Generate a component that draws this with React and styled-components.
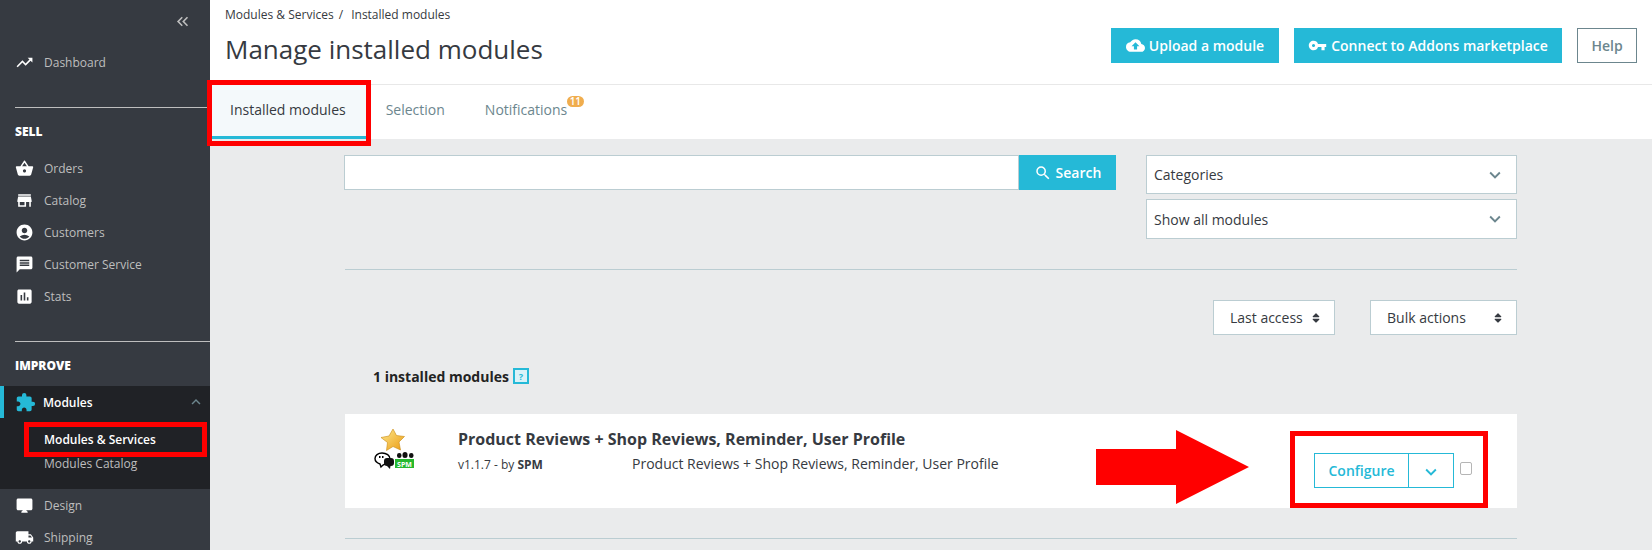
import styled, { createGlobalStyle } from 'styled-components';
import {
  MdTrendingUp, MdShoppingBasket, MdStore, MdAccountCircle, MdMessage, MdAssessment,
  MdExtension, MdDesktopMac, MdLocalShipping, MdCloudUpload, MdVpnKey, MdSearch,
  MdExpandMore, MdExpandLess, MdKeyboardDoubleArrowLeft,
} from 'react-icons/md';
import { FaSort } from 'react-icons/fa';

const GlobalStyle = createGlobalStyle`
  html, body { margin: 0; padding: 0; height: 550px; overflow: hidden; }
  body { font-family: "Open Sans", "Liberation Sans", sans-serif; color: #363a41; }
  * { box-sizing: border-box; }
`;

const Page = styled.div`
  display: flex;
  width: 1652px;
  height: 550px;
  overflow: hidden;
`;

const Sidebar = styled.aside`
  width: 210px;
  flex-shrink: 0;
  background: #363a41;
  color: #bebebe;
  font-size: 12px;
`;

const Collapse = styled.div`
  display: flex;
  justify-content: flex-end;
  height: 46px;
  padding: 12px 18px 0 0;
  color: #bebebe;
  font-size: 19px;
`;

const NavRow = styled.div`
  display: flex;
  align-items: center;
  height: 32px;
  padding-left: 15px;
  gap: 10px;
  svg { font-size: 19px; color: #fff; flex-shrink: 0; }
`;

const NavList = styled.div`
  margin-top: 8px;
`;

const Divider = styled.div`
  height: 1px;
  margin-left: 15px;
  margin-top: ${p => p.$top}px;
  background: #bebebe;
`;

const SectionTitle = styled.div`
  color: #fff;
  font-size: 12px;
  font-weight: 800;
  height: 24px;
  line-height: 24px;
  padding-left: 15px;
  margin-top: ${p => p.$top}px;
  margin-bottom: ${p => p.$bottom || 0}px;
`;

const ActiveGroup = styled.div`
  background: #202226;
  height: 103px;
  position: relative;
`;

const ActiveRow = styled.div`
  display: flex;
  align-items: center;
  height: 32px;
  padding: 0 5px 0 11px;
  border-left: 4px solid #25b9d7;
  gap: 8px;
  color: #fff;
  font-size: 12px;
  font-weight: 600;
  svg:first-child { font-size: 21px; color: #25b9d7; margin-right: -1px; }
  span { flex: 1; }
  svg:last-child { font-size: 18px; color: #6c868e; }
`;

const SubLink = styled.div`
  height: 24px;
  line-height: 24px;
  padding-left: 44px;
  font-size: 12px;
  color: ${p => (p.$active ? '#fff' : '#bebebe')};
  font-weight: ${p => (p.$active ? 600 : 400)};
  margin-top: ${p => (p.$active ? 10 : 0)}px;
`;

const RedFrame = styled.div`
  position: absolute;
  border: 5px solid #ff0000;
  pointer-events: none;
`;

const SideFrame = styled(RedFrame)`
  left: 24px;
  top: 36px;
  width: 183px;
  height: 35px;
`;

const TabFrame = styled(RedFrame)`
  left: -3px;
  top: -5px;
  width: 164px;
  height: 66px;
`;

const ActionFrame = styled(RedFrame)`
  left: 945px;
  top: 17px;
  width: 198px;
  height: 77px;
`;

const Main = styled.main`
  flex: 1;
  min-width: 0;
  background: #eaebec;
`;

const Header = styled.header`
  background: #fff;
  height: 85px;
  border-bottom: 1px solid #e8e8e8;
  padding: 0 15px;
  display: flex;
  justify-content: space-between;
`;

const Breadcrumb = styled.div`
  font-size: 12px;
  line-height: 16px;
  padding-top: 7px;
  color: #363a41;
  span { margin: 0 5px; }
`;

const Title = styled.h1`
  margin: 8px 0 0;
  font-size: 26px;
  line-height: 36px;
  font-weight: 400;
  color: #363a41;
`;

const Actions = styled.div`
  display: flex;
  gap: 15px;
  padding-top: 28px;
`;

const PrimaryButton = styled.div`
  display: flex;
  align-items: center;
  justify-content: center;
  gap: 4px;
  height: 35px;
  width: ${p => p.$width}px;
  background: #25b9d7;
  color: #fff;
  font-size: 14px;
  font-weight: 600;
  svg { font-size: 19px; }
`;

const HelpButton = styled.div`
  display: flex;
  align-items: center;
  justify-content: center;
  height: 35px;
  width: 60px;
  border: 1px solid #6c868e;
  color: #6c868e;
  font-size: 14px;
  font-weight: 600;
`;

const Tabs = styled.nav`
  display: flex;
  align-items: stretch;
  height: 54px;
  background: #fff;
  padding-left: 2px;
  position: relative;
`;

const Tab = styled.div`
  position: relative;
  display: flex;
  align-items: center;
  height: 54px;
  padding: 0 20px 3px ${p => (p.$active ? 18 : 20)}px;
  font-size: 14px;
  color: ${p => (p.$active ? '#363a41' : '#6c868e')};
  background: ${p => (p.$active ? '#f4f9fb' : '#fff')};
  border-bottom: 3px solid ${p => (p.$active ? '#25b9d7' : 'transparent')};
`;

const Badge = styled.span`
  position: absolute;
  left: 102px;
  top: 11px;
  width: 17px;
  height: 11px;
  border-radius: 6px;
  background: #f0ad4e;
  color: #fff;
  font-size: 10px;
  font-weight: 600;
  line-height: 11px;
  text-align: center;
`;

const Content = styled.div`
  width: 1172px;
  margin-left: 135px;
  padding-top: 16px;
`;

const FilterRow = styled.div`
  display: flex;
  justify-content: space-between;
`;

const SearchBox = styled.div`
  display: flex;
  width: 772px;
  height: 35px;
  margin-left: -1px;
`;

const SearchInput = styled.div`
  flex: 1;
  background: #fff;
  border: 1px solid #bbcdd2;
`;

const SearchButton = styled.div`
  width: 97px;
  display: flex;
  align-items: center;
  justify-content: center;
  gap: 4px;
  background: #25b9d7;
  color: #fff;
  font-size: 14px;
  font-weight: 600;
  svg { font-size: 18px; }
`;

const SelectColumn = styled.div`
  display: flex;
  flex-direction: column;
  gap: 5px;
  width: 371px;
`;

const Select = styled.div`
  display: flex;
  align-items: center;
  justify-content: space-between;
  height: ${p => p.$height}px;
  padding: 0 10px 0 7px;
  background: #fff;
  border: 1px solid #bbcdd2;
  font-size: 14px;
  svg { font-size: 22px; color: #6c868e; }
`;

const Rule = styled.div`
  height: 1px;
  background: #bbcdd2;
  margin-top: 30px;
`;

const SortRow = styled.div`
  display: flex;
  justify-content: flex-end;
  gap: 35px;
  margin-top: 30px;
`;

const SortSelect = styled.div`
  display: flex;
  align-items: center;
  justify-content: space-between;
  width: ${p => p.$width}px;
  height: 35px;
  padding: 0 12px 0 16px;
  background: #fff;
  border: 1px solid #bbcdd2;
  font-size: 14px;
  svg { font-size: 12px; color: #363a41; }
`;

const CountRow = styled.div`
  display: flex;
  align-items: center;
  gap: 4px;
  height: 16px;
  margin: 33px 0 30px 28px;
  font-size: 14px;
  font-weight: 700;
  color: #232323;
`;

const HelpTag = styled.span`
  display: flex;
  align-items: center;
  justify-content: center;
  width: 16px;
  height: 16px;
  border: 2px solid #25b9d7;
  background: #d9f2f8;
  color: #25b9d7;
  font-size: 9px;
  font-weight: 700;
`;

const ModuleCard = styled.div`
  position: relative;
  display: flex;
  height: 94px;
  background: #fff;
`;

const LogoCell = styled.div`
  width: 113px;
  padding: 14px 0 0 28px;
`;

const ModuleInfo = styled.div`
  padding-top: 13px;
`;

const ModuleName = styled.div`
  font-size: 16px;
  line-height: 24px;
  font-weight: 700;
  color: #363a41;
`;

const ModuleMeta = styled.div`
  display: flex;
  margin-top: 3px;
  font-size: 12px;
  line-height: 22px;
  b { font-weight: 700; }
`;

const Version = styled.div`
  width: 174px;
`;

const Description = styled.div`
  font-size: 14px;
  line-height: 20px;
`;

const ButtonGroup = styled.div`
  position: absolute;
  left: 969px;
  top: 39px;
  display: flex;
  height: 35px;
  border: 1px solid #25b9d7;
  color: #25b9d7;
  font-size: 14px;
  font-weight: 600;
`;

const ConfigureButton = styled.div`
  width: 94px;
  display: flex;
  align-items: center;
  justify-content: center;
  border-right: 1px solid #25b9d7;
`;

const CaretButton = styled.div`
  width: 44px;
  display: flex;
  align-items: center;
  justify-content: center;
  svg { font-size: 22px; margin-top: 3px; }
`;

const CheckBox = styled.div`
  position: absolute;
  left: 1115px;
  top: 48px;
  width: 12px;
  height: 13px;
  border: 1px solid #b5b5b5;
  border-radius: 2px;
  background: #fff;
`;

const ArrowMark = styled.svg`
  position: absolute;
  left: 751px;
  top: 16px;
`;

const nav = [
  [MdShoppingBasket, 'Orders'],
  [MdStore, 'Catalog'],
  [MdAccountCircle, 'Customers'],
  [MdMessage, 'Customer Service'],
  [MdAssessment, 'Stats'],
];

const ModuleLogo = () => (
  <svg width="42" height="42" viewBox="0 0 42 42">
    <defs>
      <linearGradient id="star" x1="0" y1="0" x2="1" y2="1">
        <stop offset="0" stopColor="#fde98f" />
        <stop offset="1" stopColor="#eb9a12" />
      </linearGradient>
    </defs>
    <path d="M20 1l3.500 6.500 8 1-5.500 5.500 1.500 8-7.500-3.500-6.500 4 1-8L8 9.500l8-1.500z" fill="url(#star)" stroke="#c98a12" strokeWidth=".6" />
    <path d="M9 25c4.500 0 8 2.500 8 6 0 1-.3 2-1 3l-6 3-2 2-1-3c-3-1-5-3-5-5.500C2 27.500 5 25 9 25z" fill="#fff" stroke="#000" strokeWidth="1.400" />
    <rect x="6" y="28" width="1.500" height="2" fill="#000" />
    <rect x="9" y="28" width="1.500" height="2" fill="#000" />
    <path d="M11 33a3 3 0 0 1 3-3h4a3 3 0 0 1 3 3v2a3 3 0 0 1-3 3h-.5l-.5 3-3-3a3 3 0 0 1-3-3z" fill="#111" />
    <rect x="24" y="25" width="4.500" height="5" rx="2.200" fill="#111" />
    <rect x="29.500" y="24" width="5" height="6" rx="2.500" fill="#111" />
    <rect x="36" y="25" width="4.500" height="5" rx="2.200" fill="#111" />
    <rect x="22" y="31" width="19" height="9" fill="#27b92f" />
    <text x="31.500" y="38.500" fontSize="7" fontWeight="700" fill="#fff" textAnchor="middle">SPM</text>
  </svg>
);

export default function App() {
  return (
    <Page>
      <GlobalStyle />
      <Sidebar>
        <Collapse><MdKeyboardDoubleArrowLeft /></Collapse>
        <NavRow><MdTrendingUp />Dashboard</NavRow>
        <Divider $top={29} />
        <SectionTitle $top={12}>SELL</SectionTitle>
        <NavList>
          {nav.map(([Icon, label]) => (
            <NavRow key={label}><Icon />{label}</NavRow>
          ))}
        </NavList>
        <Divider $top={29} />
        <SectionTitle $top={12} $bottom={8}>IMPROVE</SectionTitle>
        <ActiveGroup>
          <ActiveRow><MdExtension /><span>Modules</span><MdExpandLess /></ActiveRow>
          <SubLink $active>Modules &amp; Services</SubLink>
          <SubLink>Modules Catalog</SubLink>
          <SideFrame />
        </ActiveGroup>
        <NavRow><MdDesktopMac />Design</NavRow>
        <NavRow><MdLocalShipping />Shipping</NavRow>
      </Sidebar>
      <Main>
        <Header>
          <div>
            <Breadcrumb>Modules &amp; Services<span>/</span> Installed modules</Breadcrumb>
            <Title>Manage installed modules</Title>
          </div>
          <Actions>
            <PrimaryButton $width={168}><MdCloudUpload />Upload a module</PrimaryButton>
            <PrimaryButton $width={268}><MdVpnKey />Connect to Addons marketplace</PrimaryButton>
            <HelpButton>Help</HelpButton>
          </Actions>
        </Header>
        <Tabs>
          <Tab $active>Installed modules</Tab>
          <Tab>Selection</Tab>
          <Tab>Notifications<Badge>11</Badge></Tab>
          <TabFrame />
        </Tabs>
        <Content>
          <FilterRow>
            <SearchBox>
              <SearchInput />
              <SearchButton><MdSearch />Search</SearchButton>
            </SearchBox>
            <SelectColumn>
              <Select $height={39}>Categories<MdExpandMore /></Select>
              <Select $height={40}>Show all modules<MdExpandMore /></Select>
            </SelectColumn>
          </FilterRow>
          <Rule />
          <SortRow>
            <SortSelect $width={122}>Last access<FaSort /></SortSelect>
            <SortSelect $width={147}>Bulk actions<FaSort /></SortSelect>
          </SortRow>
          <CountRow>1 installed modules <HelpTag>?</HelpTag></CountRow>
          <ModuleCard>
            <LogoCell><ModuleLogo /></LogoCell>
            <ModuleInfo>
              <ModuleName>Product Reviews + Shop Reviews, Reminder, User Profile</ModuleName>
              <ModuleMeta>
                <Version>v1.1.7 - by <b>SPM</b></Version>
                <Description>Product Reviews + Shop Reviews, Reminder, User Profile</Description>
              </ModuleMeta>
            </ModuleInfo>
            <ArrowMark width="153" height="74" viewBox="0 0 153 74">
              <path d="M0 19h80V0l73 37-73 37V55H0z" fill="#ff0000" />
            </ArrowMark>
            <ActionFrame />
            <ButtonGroup>
              <ConfigureButton>Configure</ConfigureButton>
              <CaretButton><MdExpandMore /></CaretButton>
            </ButtonGroup>
            <CheckBox />
          </ModuleCard>
          <Rule />
        </Content>
      </Main>
    </Page>
  );
}
